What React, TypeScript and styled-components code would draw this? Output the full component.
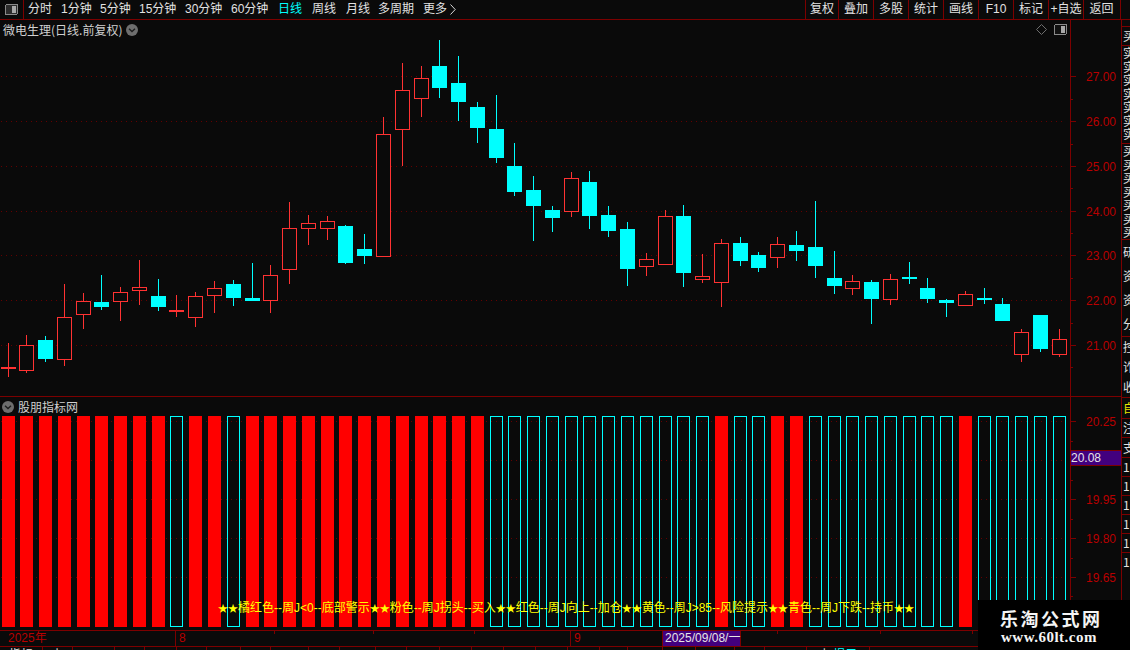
import React from "react";
import styled, { createGlobalStyle } from "styled-components";

const LINE = "#7c0000";
const CYAN = "#00ffff";
const RED = "#ff3232";
const AXIS = "#b80000";

const Global = createGlobalStyle`
  html, body { margin: 0; padding: 0; background: #0a0a0a; }
`;

const Page = styled.div`
  position: relative;
  width: 1130px;
  height: 650px;
  overflow: hidden;
  background: #0a0a0a;
  color: #e2e2e2;
  display: flex;
  flex-direction: column;
  font-family: "Noto Sans CJK SC", "Liberation Sans", sans-serif;
  font-size: 12px;
`;

const Toolbar = styled.div`
  height: 19px;
  flex: none;
  display: flex;
  align-items: stretch;
  border-bottom: 1px solid ${LINE};
`;

const IconCell = styled.div`
  width: 23px;
  flex: none;
  border-right: 1px solid ${LINE};
  display: flex;
  align-items: center;
  justify-content: center;
`;

const PeriodGroup = styled.div`
  display: flex;
  align-items: center;
  padding-left: 4px;
  flex: 1;
`;

const Period = styled.span<{ $active?: boolean; $w: number }>`
  width: ${(p) => p.$w}px;
  flex: none;
  display: flex;
  align-items: center;
  gap: 3px;
  color: ${(p) => (p.$active ? CYAN : "#e2e2e2")};
  line-height: 19px;
  white-space: nowrap;
  font-family: "Liberation Sans", "Noto Sans CJK SC", sans-serif;
`;

const ToolGroup = styled.div`
  display: flex;
  width: 315px;
  flex: none;
  margin-right: 9px;
  border-right: 1px solid ${LINE};
`;

const Tool = styled.div<{ $w: number }>`
  width: ${(p) => p.$w}px;
  flex: none;
  box-sizing: border-box;
  border-left: 1px solid ${LINE};
  text-align: center;
  line-height: 19px;
  white-space: nowrap;
  font-family: "Liberation Sans", "Noto Sans CJK SC", sans-serif;
`;

const Body = styled.div`
  flex: 1;
  min-height: 0;
  display: flex;
`;

const Workspace = styled.div`
  width: 1121px;
  flex: none;
  display: flex;
  flex-direction: column;
`;

const PanelRow = styled.div<{ $h: number }>`
  height: ${(p) => p.$h}px;
  flex: none;
  box-sizing: border-box;
  border-bottom: 1px solid ${LINE};
  display: flex;
`;

const ChartArea = styled.div`
  position: relative;
  width: 1070px;
  flex: none;
  overflow: hidden;
  svg { display: block; }
`;

const Legend = styled.div<{ $left: number }>`
  position: absolute;
  left: ${(p) => p.$left}px;
  top: 3px;
  display: flex;
  align-items: center;
  gap: 4px;
  color: #d0d0d0;
  line-height: 14px;
  white-space: nowrap;
`;

const CornerIcons = styled.div`
  position: absolute;
  right: 3px;
  top: 4px;
  display: flex;
  align-items: center;
  gap: 7px;
`;

const Axis = styled.div`
  position: relative;
  width: 51px;
  flex: none;
  box-sizing: border-box;
  border-left: 1px solid ${LINE};
`;

const Tick = styled.i<{ $long?: boolean }>`
  position: absolute;
  left: 0;
  width: ${(p) => (p.$long ? 5 : 2)}px;
  height: 1px;
  background: ${LINE};
`;

const AxisLabel = styled.span`
  position: absolute;
  right: 5px;
  margin-top: 1px;
  transform: translateY(-50%);
  color: ${AXIS};
  font-family: "Liberation Sans", sans-serif;
  font-size: 12px;
  line-height: 14px;
`;

const PriceTag = styled.div`
  position: absolute;
  left: 0;
  right: 0;
  top: 53px;
  height: 16px;
  box-sizing: border-box;
  border-top: 1px solid ${LINE};
  border-bottom: 1px solid ${LINE};
  background: #42007e;
  color: #e6e6e6;
  font-family: "Liberation Sans", sans-serif;
  line-height: 14px;
`;

const Banner = styled.div`
  position: absolute;
  left: 218px;
  top: 203px;
  color: #ffff00;
  line-height: 16px;
  white-space: nowrap;
  font-family: "Liberation Sans", "Noto Sans CJK SC", sans-serif;
`;

const Stars = styled.span`
  font-size: 10px;
`;

const TimeAxis = styled.div`
  position: relative;
  height: 16px;
  flex: none;
  box-sizing: border-box;
  border-bottom: 1px solid ${LINE};
  color: ${AXIS};
  font-family: "Liberation Sans", "Noto Sans CJK SC", sans-serif;
  line-height: 15px;
`;

const YearMark = styled.span<{ $x: number }>`
  position: absolute;
  left: ${(p) => p.$x}px;
  top: 0;
`;

const MonthMark = styled.span<{ $x: number }>`
  position: absolute;
  left: ${(p) => p.$x}px;
  top: 0;
  height: 15px;
  padding-left: 3px;
  border-left: 1px solid ${LINE};
`;

const ShortMark = styled.i`
  position: absolute;
  top: 0;
  width: 1px;
  height: 3px;
  background: ${LINE};
`;

const CursorDate = styled.span`
  position: absolute;
  left: 662px;
  top: 0;
  width: 79px;
  height: 15px;
  box-sizing: border-box;
  border-left: 1px solid ${LINE};
  border-right: 1px solid ${LINE};
  padding-left: 2px;
  background: #42007e;
  color: #e6e6e6;
  white-space: nowrap;
`;

const TabStrip = styled.div`
  flex: 1;
  min-height: 0;
  overflow: hidden;
  display: flex;
`;

const Tab = styled.div<{ $w: number }>`
  width: ${(p) => p.$w}px;
  flex: none;
  box-sizing: border-box;
  border-right: 1px solid ${LINE};
  text-align: center;
  line-height: 14px;
  white-space: nowrap;
  overflow: hidden;
`;

const TabAccent = styled.span`
  color: ${CYAN};
`;

const SideStrip = styled.div`
  flex: 1;
  min-width: 0;
  display: flex;
  flex-direction: column;
  overflow: hidden;
  padding-top: 6px;
  border-left: 1px solid ${LINE};
`;

const SideCell = styled.div<{ $h: number; $lh: number; $yellow?: boolean }>`
  height: ${(p) => p.$h}px;
  flex: none;
  box-sizing: border-box;
  border-top: 1px solid ${LINE};
  padding-left: 1px;
  color: ${(p) => (p.$yellow ? "#e6e600" : "#e2e2e2")};
  line-height: ${(p) => p.$lh}px;
  width: 14px;
  word-break: break-all;
  overflow: hidden;
`;

const Watermark = styled.div`
  position: absolute;
  right: 0;
  bottom: 0;
  width: 152px;
  height: 50px;
  background: #000;
  color: #f4f4f4;
  display: flex;
  flex-direction: column;
  align-items: flex-start;
  font-weight: 700;
  padding: 7px 0 0 22px;
  box-sizing: border-box;
`;

const MarkTitle = styled.div`
  font-family: "Noto Sans CJK SC", serif;
  font-size: 18px;
  line-height: 22px;
  letter-spacing: 2.5px;
`;

const MarkUrl = styled.div`
  font-family: "Liberation Serif", serif;
  font-size: 15px;
  line-height: 16px;
  letter-spacing: 0.5px;
  margin-left: 1px;
`;

type C = [number, number, number, number, number, 0 | 1];
// left, high, low, bodyTop, bodyBottom, 1=up(red outline) 0=down(cyan)
const candles: C[] = [
  [1, 343, 377, 367, 369, 1], [19, 335, 373, 345, 371, 1], [38, 336, 362, 340, 359, 0],
  [57, 284, 366, 317, 360, 1], [76, 293, 329, 301, 315, 1], [94, 275, 310, 302, 307, 0],
  [113, 287, 321, 292, 302, 1], [132, 260, 305, 287, 291, 1], [151, 279, 311, 296, 307, 0],
  [169, 295, 317, 310, 312, 1], [188, 292, 327, 296, 318, 1], [207, 281, 313, 288, 296, 1],
  [226, 280, 306, 284, 298, 0], [245, 263, 301, 298, 301, 0], [263, 265, 313, 275, 301, 1],
  [282, 202, 284, 228, 270, 1], [301, 215, 245, 223, 229, 1], [320, 216, 240, 221, 229, 1],
  [338, 225, 264, 226, 263, 0], [357, 234, 264, 249, 256, 0], [376, 117, 257, 134, 257, 1],
  [395, 63, 166, 90, 130, 1], [414, 66, 117, 78, 99, 1], [432, 40, 98, 66, 88, 0],
  [451, 56, 121, 83, 102, 0], [470, 102, 143, 107, 128, 0], [489, 95, 163, 129, 158, 0],
  [507, 143, 196, 166, 192, 0], [526, 176, 241, 190, 206, 0], [545, 206, 232, 210, 218, 0],
  [564, 172, 217, 178, 212, 1], [582, 171, 229, 182, 216, 0], [601, 206, 237, 215, 231, 0],
  [620, 222, 286, 229, 269, 0], [639, 253, 276, 259, 267, 1], [658, 210, 265, 216, 265, 1],
  [676, 205, 287, 216, 273, 0], [695, 254, 283, 276, 280, 1], [714, 239, 307, 243, 283, 1],
  [733, 237, 266, 243, 261, 0], [751, 252, 272, 255, 268, 0], [770, 237, 268, 244, 258, 1],
  [789, 231, 261, 245, 251, 0], [808, 201, 278, 247, 266, 0], [827, 251, 294, 278, 286, 0],
  [845, 275, 295, 281, 289, 1], [864, 280, 324, 282, 299, 0], [883, 274, 305, 279, 300, 1],
  [902, 262, 284, 277, 279, 0], [920, 278, 303, 288, 299, 0], [939, 299, 317, 300, 303, 0],
  [958, 291, 306, 294, 306, 1], [977, 288, 304, 298, 300, 0], [995, 298, 321, 304, 321, 0],
  [1014, 329, 362, 332, 355, 1], [1033, 315, 352, 315, 349, 0], [1052, 329, 357, 339, 355, 1],
];

const UP_TOP = 20;
const LOW_TOP = 397;
const redBar = (i: number) => {
  const n = i + 1;
  if (n <= 26) return n !== 10 && n !== 13;
  return n === 39 || n === 42 || n === 43 || n === 52;
};

const upperGrid = [76, 121, 166, 211, 255, 300, 345];
const upperLabels = ["27.00", "26.00", "25.00", "24.00", "23.00", "22.00", "21.00"];
const upperHalf = [99, 144, 188, 233, 278, 323, 367];
const lowerGrid = [421, 499, 538, 577];
const lowerLabels = ["20.25", "19.95", "19.80", "19.65"];
const lowerExtra = [460, 441, 480, 519, 558, 596];

const GridLines = ({ ys }: { ys: number[] }) => (
  <>
    {ys.map((y) => (
      <line key={y} x1={1} x2={1066} y1={y + 0.5} y2={y + 0.5} stroke="#640000" strokeDasharray="1 4" />
    ))}
  </>
);

const CandleChart = () => (
  <svg width={1070} height={376} shapeRendering="crispEdges">
    <GridLines ys={upperGrid.map((y) => y - UP_TOP)} />
    {candles.map(([x, hi, lo, top, bot, up], i) => {
      const color = up ? RED : CYAN;
      const cx = x + 7.5;
      const h = hi - UP_TOP;
      const l = lo - UP_TOP;
      const t = top - UP_TOP;
      const b = bot - UP_TOP;
      return (
        <g key={i}>
          <line x1={cx} x2={cx} y1={h} y2={l} stroke={color} />
          {!up || b - t <= 2 ? (
            <rect x={x} y={t} width={15} height={b - t} fill={color} />
          ) : (
            <rect x={x + 0.5} y={t + 0.5} width={14} height={b - t - 1} fill="#0a0a0a" stroke={color} />
          )}
        </g>
      );
    })}
  </svg>
);

const BarChart = () => (
  <svg width={1070} height={233} shapeRendering="crispEdges">
    <GridLines ys={lowerGrid.concat(460).map((y) => y - LOW_TOP)} />
    {candles.map(([x], i) =>
      redBar(i) ? (
        <rect key={i} x={x + 1} y={416 - LOW_TOP} width={13} height={211} fill="#ff0000" />
      ) : (
        <rect key={i} x={x + 1.5} y={416.5 - LOW_TOP} width={12} height={210} fill="none" stroke={CYAN} />
      )
    )}
  </svg>
);

const Chevron = () => (
  <svg width={12} height={12} viewBox="0 0 12 12">
    <circle cx={6} cy={6} r={6} fill="#6e6e6e" />
    <path d="M3 4.8 L6 7.6 L9 4.8" fill="none" stroke="#1c1c1c" strokeWidth={1.3} />
  </svg>
);

const SplitIcon = ({ filled }: { filled?: boolean }) => (
  <svg width={13} height={11} viewBox="0 0 13 11" shapeRendering="crispEdges">
    <rect x={0.5} y={0.5} width={12} height={10} rx={1.5} fill={filled ? "#2c2c2c" : "#111"} stroke="#8a8a8a" />
    <rect x={7} y={2} width={4} height={7} fill="#a8a8a8" />
  </svg>
);

const Diamond = () => (
  <svg width={11} height={11} viewBox="0 0 11 11">
    <path d="M5.5 0.5 L10.5 5.5 L5.5 10.5 L0.5 5.5 Z" fill="none" stroke="#6e6e6e" />
  </svg>
);

const MoreArrow = () => (
  <svg width={6} height={11} viewBox="0 0 6 11">
    <path d="M0.5 0.5 L5.2 5.5 L0.5 10.5" fill="none" stroke="#d8d8d8" />
  </svg>
);

const periods: [string, number][] = [
  ["分时", 33], ["1分钟", 39], ["5分钟", 39], ["15分钟", 46], ["30分钟", 46], ["60分钟", 47],
  ["日线", 34], ["周线", 34], ["月线", 32], ["多周期", 45], ["更多", 40],
];
const tools = ["复权", "叠加", "多股", "统计", "画线", "F10", "标记", "+自选", "返回"];
const toolWidths = [33, 35, 35, 35, 35, 35, 35, 35, 36];

const sideCells: { t: string; h: number; lh: number; y?: boolean }[] = [
  { t: "买", h: 19, lh: 17 },
  { t: "实实实实实实实", h: 98, lh: 13.5 },
  { t: "买买买买买买买", h: 96, lh: 13.5 },
  { t: "研资资分", h: 97, lh: 24 },
  { t: "控诈收", h: 61, lh: 20 },
  { t: "自", h: 21, lh: 20, y: true },
  { t: "注", h: 19, lh: 18 },
  { t: "支", h: 20, lh: 19 },
  { t: "1", h: 19, lh: 18 },
  { t: "1", h: 19, lh: 18 },
  { t: "1", h: 19, lh: 18 },
  { t: "1", h: 19, lh: 18 },
  { t: "1", h: 19, lh: 18 },
  { t: "1", h: 19, lh: 18 },
];

const tabWidths = [43, 30, 42, 30, 32, 30, 34, 30, 38, 31, 36, 31, 33, 32, 32, 32, 32, 32, 28, 35, 33, 39, 30, 42, 63];

const bannerParts = ["橘红色--周J<0--底部警示", "粉色--周J拐头--买入", "红色--周J向上--加仓", "黄色--周J>85--风险提示", "青色--周J下跌--持币"];

export default function App() {
  return (
    <Page>
      <Global />
      <Toolbar>
        <IconCell>
          <SplitIcon filled />
        </IconCell>
        <PeriodGroup>
          {periods.map(([p, w]) => (
            <Period key={p} $w={w} $active={p === "日线"}>
              {p}
              {p === "更多" && <MoreArrow />}
            </Period>
          ))}
        </PeriodGroup>
        <ToolGroup>
          {tools.map((t, i) => (
            <Tool key={t} $w={toolWidths[i]}>
              {t}
            </Tool>
          ))}
        </ToolGroup>
      </Toolbar>
      <Body>
        <Workspace>
          <PanelRow $h={377}>
            <ChartArea>
              <CandleChart />
              <Legend $left={3}>
                <span>微电生理(日线.前复权)</span>
                <Chevron />
              </Legend>
              <CornerIcons>
                <Diamond />
                <SplitIcon />
              </CornerIcons>
            </ChartArea>
            <Axis>
              {upperGrid.map((y, i) => (
                <React.Fragment key={y}>
                  <Tick $long style={{ top: y - UP_TOP }} />
                  <AxisLabel style={{ top: y - UP_TOP }}>{upperLabels[i]}</AxisLabel>
                </React.Fragment>
              ))}
              {upperHalf.map((y) => (
                <Tick key={y} style={{ top: y - UP_TOP }} />
              ))}
            </Axis>
          </PanelRow>
          <PanelRow $h={234}>
            <ChartArea>
              <BarChart />
              <Legend $left={2}>
                <Chevron />
                <span>股朋指标网</span>
              </Legend>
              <Banner>
                <Stars>★★</Stars>
                {bannerParts.map((b) => (
                  <React.Fragment key={b}>
                    {b}
                    <Stars>★★</Stars>
                  </React.Fragment>
                ))}
              </Banner>
            </ChartArea>
            <Axis>
              {lowerGrid.map((y, i) => (
                <React.Fragment key={y}>
                  <Tick $long style={{ top: y - LOW_TOP }} />
                  <AxisLabel style={{ top: y - LOW_TOP }}>{lowerLabels[i]}</AxisLabel>
                </React.Fragment>
              ))}
              {lowerExtra.map((y) => (
                <Tick key={y} style={{ top: y - LOW_TOP }} />
              ))}
              <PriceTag>20.08</PriceTag>
            </Axis>
          </PanelRow>
          <TimeAxis>
            <YearMark $x={8}>2025年</YearMark>
            <MonthMark $x={175}>8</MonthMark>
            <MonthMark $x={570}>9</MonthMark>
            {[274, 373, 474, 777, 880, 972].map((x) => (
              <ShortMark key={x} style={{ left: x }} />
            ))}
            <CursorDate>2025/09/08/一</CursorDate>
          </TimeAxis>
          <TabStrip>
            {tabWidths.map((w, i) => (
              <Tab key={i} $w={w}>
                {i === 0 && "指标"}
                {i === 1 && "上"}
                {i === 24 && (
                  <>
                    上 <TabAccent>提示</TabAccent>
                  </>
                )}
              </Tab>
            ))}
          </TabStrip>
        </Workspace>
        <SideStrip>
          {sideCells.map((c, i) => (
            <SideCell key={i} $h={c.h} $lh={c.lh} $yellow={c.y}>
              {c.t}
            </SideCell>
          ))}
        </SideStrip>
      </Body>
      <Watermark>
        <MarkTitle>乐淘公式网</MarkTitle>
        <MarkUrl>www.60lt.com</MarkUrl>
      </Watermark>
    </Page>
  );
}
